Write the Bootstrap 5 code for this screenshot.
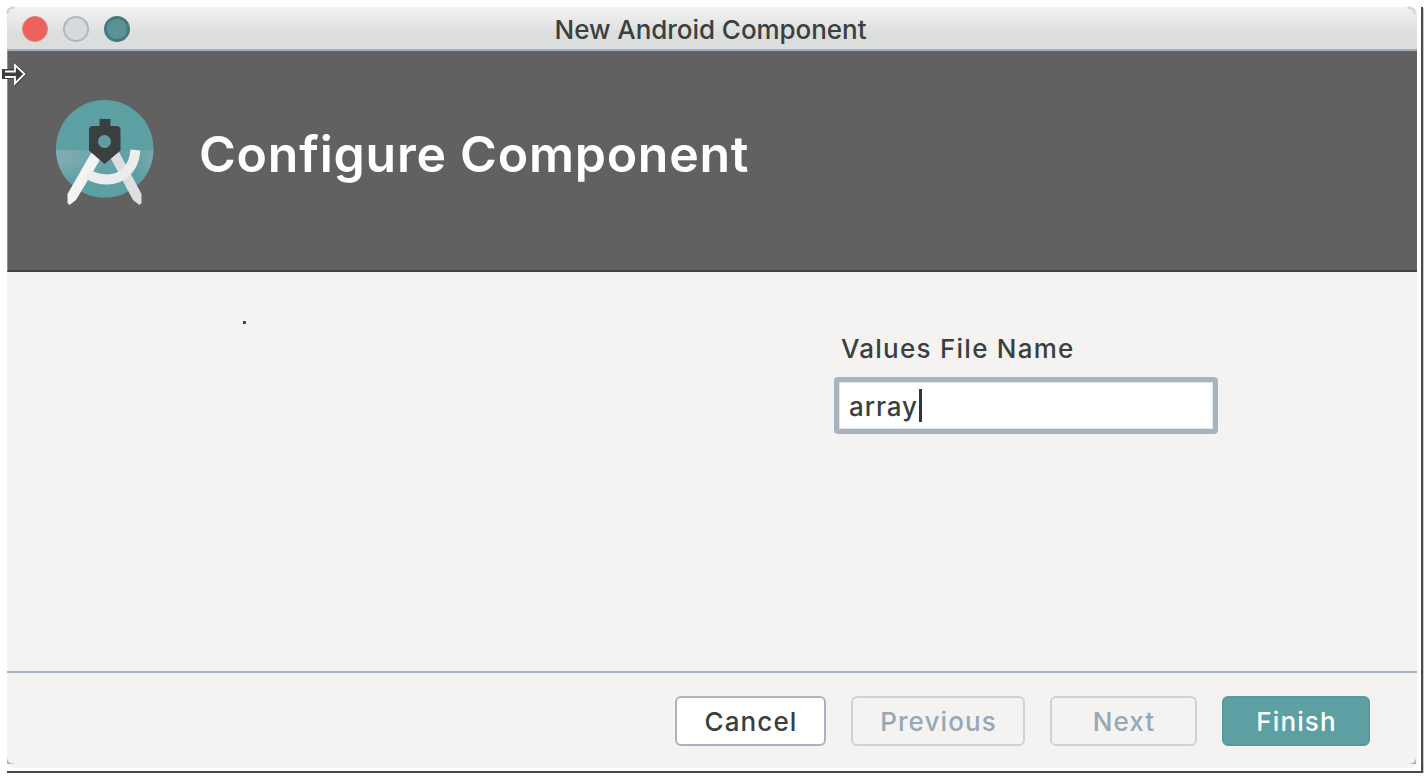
<!DOCTYPE html>
<html lang="en">
<head>
<meta charset="utf-8">
<title>New Android Component</title>
<link href="https://cdn.jsdelivr.net/npm/bootstrap@5.3.0/dist/css/bootstrap.min.css" rel="stylesheet">
<style>
body{background:#fff;font-family:Inter,"Liberation Sans",sans-serif;color:#3a3f40;font-size:26px;font-weight:500;line-height:32px}
.shade{width:1416px;height:766px;margin:8px 0 0 7px;border-right:2px solid #474b4c;border-bottom:2px solid #474b4c;box-shadow:1px 1px 0 #c5cacc}
.dialog{width:1410px;height:761px;margin-top:-1px;background:#f4f3f2;border-radius:6px;overflow:hidden}
.titlebar{height:44px;background:linear-gradient(#f3f3f2,#dcdedd 65%);border-bottom:2px solid #a3afbd}
.lights{left:15px;top:9px;gap:15px}
.light{width:26px;height:26px;border-radius:50%}
.close-dot{background:#ee605c;border:1px solid #d98583}
.min-dot{background:#d6dadd;border:2px solid #acb7c6}
.zoom-dot{background:#5b9296;border:3px solid #457b80}
.title-text{letter-spacing:-.05px;font-size:26px;padding-top:3px;margin-right:3px}
.hero{height:221px;background:#616161;border-bottom:2px solid #414548;border-left:1px solid #8a929e;padding:0 0 0 40px}
.hero svg{margin-bottom:13px}
.hero h1{font-size:50px;line-height:60px;font-weight:600;color:#fff;margin:0 0 14px 39px;letter-spacing:.76px}
.content{height:401px;border-bottom:2px solid #a9b4c2;padding:60px 0 0 827px}
.field-label{margin:0 0 12px 7px;letter-spacing:1.25px;line-height:33px;height:33px}
.field{width:384px;height:57px;background:#fff;border:5px solid #a8b3c0;border-radius:4px;padding:2px 10px 0;line-height:45px;letter-spacing:.9px;box-shadow:inset 0 0 0 1px #dfe5e9}
.caret{width:3px;height:33px;background:#333839;margin:0 0 3px 1px}
.footer-bar{padding:23px 47px 0 0;gap:25px}
.footer-bar .btn{height:50px;font-size:26px;font-weight:500;line-height:46px;padding:1px 0 0 1px;border-radius:6px;border-width:2px;letter-spacing:1.1px}
.footer-bar .b-cancel{width:151px;background:#fff;border-color:#a9b4c2;color:#3a3f40}
.footer-bar .b-prev{width:174px}
.footer-bar .b-next{width:147px}
.footer-bar .b-off{border-color:#ced3d6;color:#96a8b5}
.footer-bar .b-finish{width:148px;background:#5da0a4;border-color:#5a989c;color:#fff}
.pointer{left:0;top:60px}
.speck{left:243px;top:321px;width:3px;height:3px;background:#444}
.grip{bottom:8px}
.grip-l{left:7px}
.grip-r{right:9px}
.grip-tl{left:6px;top:6px}
.grip-tr{right:9px;top:6px}
</style>
</head>
<body class="position-relative overflow-hidden">
<div class="shade">
<main class="dialog">
 <header class="titlebar position-relative d-flex justify-content-center align-items-center">
  <div class="lights position-absolute d-flex"><span class="light close-dot"></span><span class="light min-dot"></span><span class="light zoom-dot"></span></div>
  <span class="title-text">New Android Component</span>
 </header>
 <section class="hero d-flex align-items-center">
  <svg width="112" height="120" viewBox="48 94 112 120">
   <defs><linearGradient id="lower" x1="0" x2="1"><stop offset="0" stop-color="#84acb4"/><stop offset=".4" stop-color="#6aa5aa"/><stop offset=".8" stop-color="#5da0a4"/><stop offset="1" stop-color="#78a9af"/></linearGradient>
   <linearGradient id="fade" x1="0" y1="0" x2="0" y2="1"><stop offset=".4" stop-color="#5da0a4" stop-opacity="0"/><stop offset="1" stop-color="#5da0a4"/></linearGradient></defs>
   <circle cx="104.700" cy="148.800" r="48.800" fill="#5da0a4"/>
   <path id="half" d="M56 150h97.500a48.800 48.800 0 0 1-12 31H68a48.800 48.800 0 0 1-12-31z" fill="url(#lower)"/>
   <path d="M56 150h97.500a48.800 48.800 0 0 1-12 31H68a48.800 48.800 0 0 1-12-31z" fill="url(#fade)"/>
   <path d="M110 157 119 152 141.500 194V203L139.500 205 133 200Z" fill="#dcdedf"/>
   <path d="M91 153 101 158 76 200 69.500 205 67.500 203V194Z" fill="#f3f3f2"/>
   <path d="M135.500 150C134 169 122 179.500 107 179.500C100 179.500 94 178 88 174" fill="none" stroke="#ececec" stroke-width="10"/>
   <path d="M99.500 119h11v7h6q4 0 4 4v20.500l-16 13.500L89 150.500V130q0-4 4-4h6.500z" fill="#3a3f40"/>
   <circle cx="104.500" cy="141.500" r="6.500" fill="#5da0a4"/>
  </svg>
  <h1>Configure Component</h1>
 </section>
 <section class="content">
  <div class="field-label">Values File Name</div>
  <div class="field d-flex align-items-center"><span>array</span><span class="caret"></span></div>
 </section>
 <footer class="footer-bar d-flex justify-content-end">
  <button class="btn b-cancel">Cancel</button>
  <button class="btn b-prev b-off">Previous</button>
  <button class="btn b-next b-off">Next</button>
  <button class="btn b-finish">Finish</button>
 </footer>
</main>
</div>
<svg class="pointer position-absolute" width="30" height="28" viewBox="0 60 30 28"><path d="M2 69h12v-7l13 12-12 13v-8H2z" fill="#3a3f40"/><path d="M5 71.500h10V65l9.500 9L15 83.500V77H5" fill="none" stroke="#fff" stroke-width="1.800"/></svg>
<span class="speck position-absolute"></span>
<svg class="grip grip-l position-absolute" width="8" height="8"><path d="M0 0q0 7 8 7H0z" fill="#a9b4c2"/></svg>
<svg class="grip grip-r position-absolute" width="8" height="8"><path d="M8 0q0 7-8 7h8z" fill="#a9b4c2"/></svg>
<svg class="grip-tl position-absolute" width="9" height="9"><path d="M1.500 8q0-6.500 7-6.500" fill="none" stroke="#d3d5d6" stroke-width="2.500"/></svg>
<svg class="grip-tr position-absolute" width="9" height="9"><path d="M7.500 8q0-6.500-7-6.500" fill="none" stroke="#d3d5d6" stroke-width="2.500"/></svg>
</body>
</html>
